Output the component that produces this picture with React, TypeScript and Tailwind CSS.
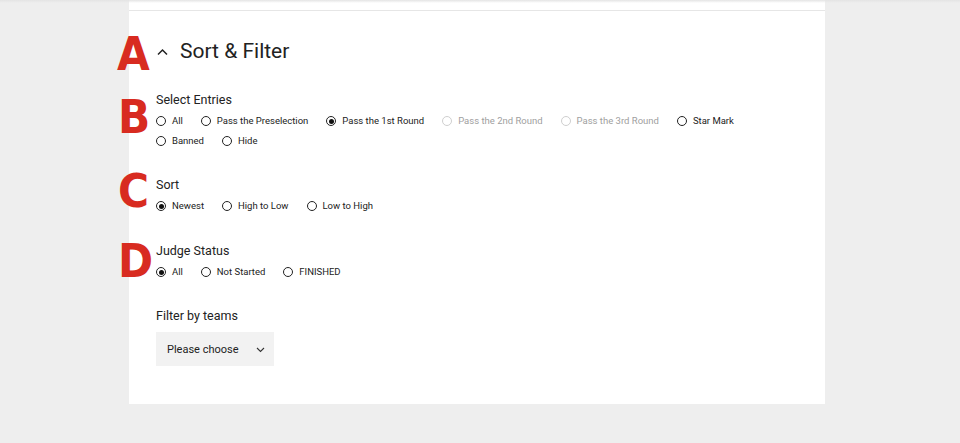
import React from "react";

type Opt = { label: string; checked?: boolean; disabled?: boolean };

function Radio({ label, checked, disabled }: Opt) {
  return (
    <div className="flex items-center mr-[18px] h-[20px]">
      <span
        className={
          "w-[10px] h-[10px] rounded-full border flex items-center justify-center shrink-0 " +
          (disabled ? "border-[#cfcfcf]" : "border-[#222]")
        }
      >
        {checked && <span className="w-[5px] h-[5px] rounded-full bg-[#111]" />}
      </span>
      <span
        className={
          "ml-[6px] text-[9.5px] " + (disabled ? "text-[#a0a0a0]" : "text-[#222]")
        }
      >
        {label}
      </span>
    </div>
  );
}

function Group({ title, rows }: { title: string; rows: Opt[][] }) {
  return (
    <div>
      <div className="text-[12.5px] leading-[18px] text-[#222]">{title}</div>
      <div className="mt-[2px]">
        {rows.map((r, i) => (
          <div key={i} className="flex items-center">
            {r.map((o) => (
              <Radio key={o.label} {...o} />
            ))}
          </div>
        ))}
      </div>
    </div>
  );
}

const Letter = ({ ch, top, left }: { ch: string; top: string; left: string }) => (
  <div
    className={"absolute font-bold text-[#d82b20] text-[47px] leading-none " + top + " " + left}
    style={{ fontFamily: '"DejaVu Sans Condensed", "Liberation Sans Narrow", sans-serif' }}
  >
    {ch}
  </div>
);

export default function App() {
  return (
    <div
      className="relative w-[960px] h-[443px] bg-[#eeeeee] overflow-hidden"
      style={{ fontFamily: 'Roboto, "Liberation Sans", sans-serif' }}
    >
      <div className="absolute top-0 left-0 right-0 h-[3px] bg-gradient-to-b from-[#e4e4e4] to-transparent z-10" />
      <div className="ml-[129px] w-[696px] bg-white">
        <div className="h-[11px] border-b border-[#e6e6e6]" />
        <div className="pl-[27px] pt-[27px] pb-[38px]">
          <div className="flex items-center h-[28px]">
            <svg width="11" height="8" viewBox="0 0 11 8" className="ml-[1px]">
              <polyline points="1,6.5 5.5,2 10,6.5" fill="none" stroke="#222" strokeWidth="1.5" />
            </svg>
            <span className="ml-[12px] text-[21px] text-[#222]">Sort &amp; Filter</span>
          </div>
          <div className="mt-[25px]">
            <Group
              title="Select Entries"
              rows={[
                [
                  { label: "All" },
                  { label: "Pass the Preselection" },
                  { label: "Pass the 1st Round", checked: true },
                  { label: "Pass the 2nd Round", disabled: true },
                  { label: "Pass the 3rd Round", disabled: true },
                  { label: "Star Mark" },
                ],
                [{ label: "Banned" }, { label: "Hide" }],
              ]}
            />
          </div>
          <div className="mt-[25px]">
            <Group
              title="Sort"
              rows={[[{ label: "Newest", checked: true }, { label: "High to Low" }, { label: "Low to High" }]]}
            />
          </div>
          <div className="mt-[26px]">
            <Group
              title="Judge Status"
              rows={[[{ label: "All", checked: true }, { label: "Not Started" }, { label: "FINISHED" }]]}
            />
          </div>
          <div className="mt-[25px]">
            <div className="text-[12.5px] leading-[18px] text-[#222]">Filter by teams</div>
            <div className="mt-[7px] w-[118px] h-[34px] bg-[#f2f2f2] flex items-center pl-[11px] pr-[9px] justify-between">
              <span className="text-[11px] text-[#222] mt-[2px]">Please choose</span>
              <svg width="9" height="6" viewBox="0 0 9 6" className="mt-[1px]">
                <polyline points="1,1 4.5,4.5 8,1" fill="none" stroke="#333" strokeWidth="1.1" />
              </svg>
            </div>
          </div>
        </div>
      </div>
      <Letter ch="A" top="top-[30px]" left="left-[117px]" />
      <Letter ch="B" top="top-[93px]" left="left-[118px]" />
      <Letter ch="C" top="top-[167px]" left="left-[118px]" />
      <Letter ch="D" top="top-[237px]" left="left-[118px]" />
    </div>
  );
}
